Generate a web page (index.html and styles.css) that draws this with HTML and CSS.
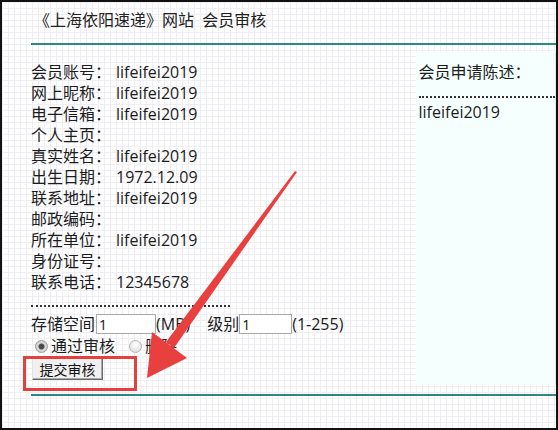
FILE: index.html
```html
<!DOCTYPE html>
<html lang="zh-CN">
<head>
    <meta charset="UTF-8">
    <title>会员审核</title>
    <link rel="stylesheet" href="styles.css">
</head>
<body>

<div class="frame">
    <h1 class="title">《上海依阳速递》网站&nbsp; 会员审核</h1>
    <div class="rule"></div>

    <div class="main">
        <div class="info">
            <div class="fields">
                <span>会员账号：</span><span>lifeifei2019</span>
                <span>网上昵称：</span><span>lifeifei2019</span>
                <span>电子信箱：</span><span>lifeifei2019</span>
                <span>个人主页：</span><span></span>
                <span>真实姓名：</span><span>lifeifei2019</span>
                <span>出生日期：</span><span>1972.12.09</span>
                <span>联系地址：</span><span>lifeifei2019</span>
                <span>邮政编码：</span><span></span>
                <span>所在单位：</span><span>lifeifei2019</span>
                <span>身份证号：</span><span></span>
                <span>联系电话：</span><span>12345678</span>
            </div>
            <div class="dots short"></div>

            <form class="audit">
                <div class="row">
                    存储空间<input class="num wide" type="text" value="1">(MB)
                    <span class="level">级别</span><input class="num" type="text" value="1">(1-255)
                </div>
                <div class="row">
                    <label class="opt"><input type="radio" name="act" checked>通过审核</label>
                    <label class="opt"><input type="radio" name="act">删除</label>
                </div>
                <button type="button" class="submit">提交审核</button>
            </form>
        </div>

        <div class="statement">
            <div class="st-head">会员申请陈述：</div>
            <div class="dots"></div>
            <div class="st-body">lifeifei2019</div>
        </div>
    </div>

    <div class="rule low"></div>

    <!-- annotation drawn over the screenshot -->
    <div class="mark"></div>
    <svg class="arrow" width="558" height="430" viewBox="0 0 558 430">
        <polygon points="295,171 297,172 174,348 166,342" fill="#e8403e"/>
        <polygon points="147,378 152,332 187,358" fill="#e8403e"/>
    </svg>
</div>

</body>
</html>
```

FILE: styles.css
```css
* { margin: 0; padding: 0; box-sizing: border-box; }
body { font-family: "Open Sans", "Noto Sans CJK SC", sans-serif; color: #1c1c1c; background: #fff; }

.frame {
    position: relative;
    width: 558px; height: 430px;
    border: 2px solid #111;
    padding: 7px 0 0 29px;
    background-color: #fff;
    background-image:
        linear-gradient(#efeef3 1px, transparent 1px),
        linear-gradient(90deg, #efeef3 1px, transparent 1px);
    background-size: 6px 6px;
    overflow: hidden;
}

.title {
    font-size: 16px; font-weight: normal; line-height: 22px;
    margin-left: 3px; color: #222;
}

.rule { height: 2px; background: #2a8a84; margin-top: 12px; }
.rule.low { margin-top: 9px; }

.main { display: flex; margin-top: 7px; }

.info { width: 386px; padding: 10px 0 5px 0; font-size: 16px; }

.fields {
    display: grid; grid-template-columns: 85px auto;
    line-height: 21px;
}

.dots { border-top: 2px dotted #333; }
.dots.short { width: 199px; margin-top: 12px; }

.audit .row {
    display: flex; align-items: center;
    height: 22px; line-height: 22px; white-space: nowrap;
}
.audit .row:first-child { margin-top: 6px; }

.num {
    width: 53px; height: 20px;
    border: 1px solid #a9a9a9;
    font: 14px "Open Sans", sans-serif;
    padding: 0 2px; background: #fff; color: #111;
}
.num.wide { width: 60px; margin-left: 1px; }
.level { margin-left: 17px; }

.opt { display: flex; align-items: center; }
.opt + .opt { margin-left: 14px; }
.opt input {
    appearance: none; -webkit-appearance: none;
    width: 13px; height: 13px; border-radius: 50%;
    border: 1px solid #b4b4b4;
    background: radial-gradient(circle at 50% 35%, #fff 0, #dcdcdc 90%);
    margin: 0 3px 0 4px;
}
.opt + .opt input { margin-left: 0; }
.opt input:checked {
    background: radial-gradient(circle, #4a4a4a 0 2.5px, #d8d8d8 3.5px, #c8c8c8 100%);
    border-color: #9a9a9a;
}

.submit {
    display: block; margin-top: 1px; margin-left: 1px;
    width: 71px; height: 22px;
    font: 14px "Noto Sans CJK SC", sans-serif; color: #111;
    background: #f0f0f0;
    border: 1px solid; border-color: #e2e2e2 #6a6a6a #6a6a6a #e2e2e2;
    box-shadow: inset -1px -1px #a8a8a8;
}

.statement {
    width: 141px;
    background: #f5fffe;
    border-right: 1px solid #e4e8e8;
    padding: 10px 0 0 3px;
    font-size: 16px; line-height: 21px;
}
.statement .dots { margin-top: 13px; }
.st-body { margin-top: 4px; }

.mark {
    position: absolute; left: 21px; top: 354px;
    width: 114px; height: 35px;
    border: 3px solid #e5403e;
}
.arrow { position: absolute; left: -2px; top: -2px; }
```
